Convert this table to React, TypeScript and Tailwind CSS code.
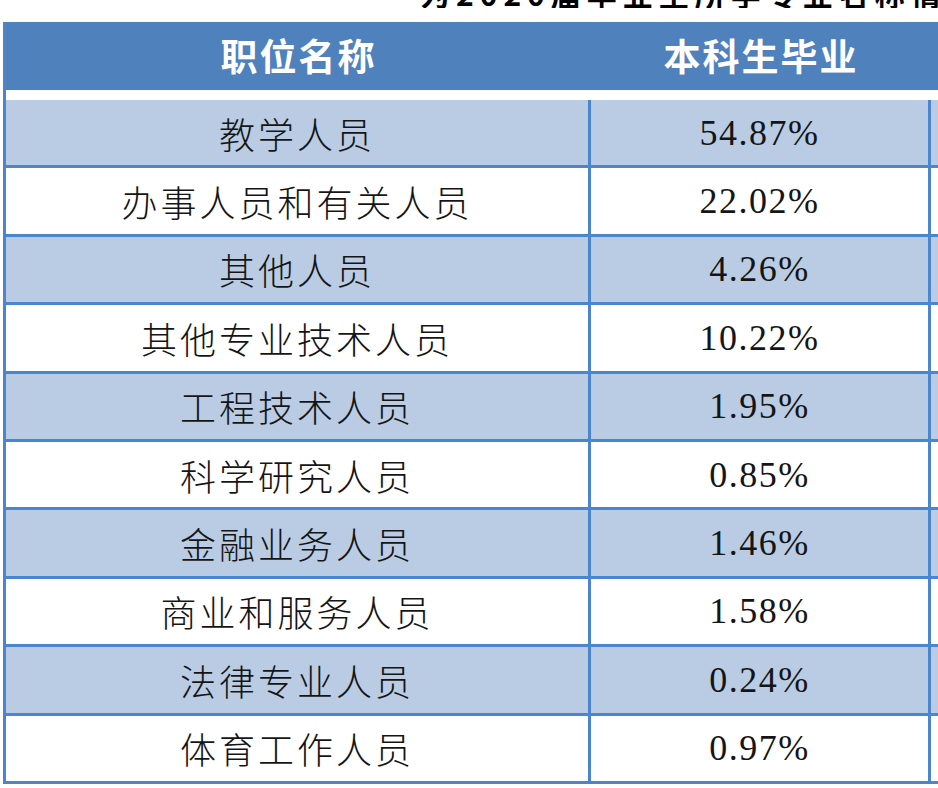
import React from 'react';

const rows = [
  { name: '教学人员', value: '54.87%' },
  { name: '办事人员和有关人员', value: '22.02%' },
  { name: '其他人员', value: '4.26%' },
  { name: '其他专业技术人员', value: '10.22%' },
  { name: '工程技术人员', value: '1.95%' },
  { name: '科学研究人员', value: '0.85%' },
  { name: '金融业务人员', value: '1.46%' },
  { name: '商业和服务人员', value: '1.58%' },
  { name: '法律专业人员', value: '0.24%' },
  { name: '体育工作人员', value: '0.97%' },
];

export default function App() {
  return (
    <div className="w-[938px] h-[788px] overflow-hidden bg-white font-['Noto_Sans_CJK_SC',sans-serif]">
      {/* cut-off caption above the table, only its lower edge shows */}
      <div className="h-[8px] overflow-hidden flex items-end pl-[420px]">
        <div className="text-[30px] leading-none font-bold text-black whitespace-nowrap tracking-[6px]">
          为2020届毕业生所学专业名称情况
        </div>
      </div>

      <div className="ml-[3px] mt-[14px] w-[1100px] border-l-[3px] border-[#4a86d0]">
        {/* header */}
        <div className="flex h-[68px] bg-[#4f81bd] text-white font-bold text-[37px] tracking-[2px]">
          <div className="w-[585px] flex items-center justify-center">职位名称</div>
          <div className="w-[340px] flex items-center justify-center">本科生毕业</div>
          <div className="flex-1" />
        </div>
        <div className="h-[10px] bg-white" />

        {rows.map((row, i) => (
          <div
            key={i}
            className={`flex h-[68.4px] border-b-[3px] border-[#4a86d0] text-[#151515] ${
              i % 2 === 0 ? 'bg-[#b9cce4]' : 'bg-white'
            }`}
          >
            <div className="w-[585px] border-r-[3px] border-[#4a86d0] flex items-center justify-center text-[36px] tracking-[3px] font-light">
              {row.name}
            </div>
            <div className="w-[340px] border-r-[3px] border-[#4a86d0] flex items-center justify-center text-[36px] tracking-[1.5px] font-['Liberation_Serif',serif]">
              {row.value}
            </div>
            <div className="flex-1" />
          </div>
        ))}
      </div>
    </div>
  );
}
